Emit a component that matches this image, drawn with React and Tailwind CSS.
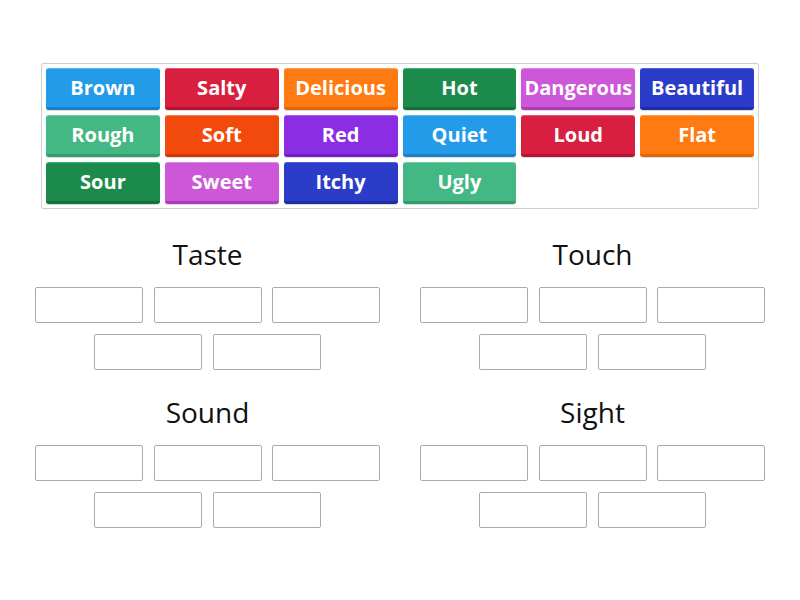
import React from "react";

const tiles = [
  { text: "Brown", cls: "bg-[#239be8] border-t-[#5cb8f2] border-b-[#1a7fc4]" },
  { text: "Salty", cls: "bg-[#d91f3f] border-t-[#e8546c] border-b-[#b3142f]" },
  { text: "Delicious", cls: "bg-[#ff7b12] border-t-[#ff9d4d] border-b-[#e0650a]" },
  { text: "Hot", cls: "bg-[#1c8a4b] border-t-[#2fbd6a] border-b-[#14703b]" },
  { text: "Dangerous", cls: "bg-[#cc57d9] border-t-[#dc85e6] border-b-[#ad3cba]" },
  { text: "Beautiful", cls: "bg-[#2b3cc8] border-t-[#4c5fe0] border-b-[#1f2da3]" },
  { text: "Rough", cls: "bg-[#43b884] border-t-[#6fd0a3] border-b-[#339a6b]" },
  { text: "Soft", cls: "bg-[#f24a0c] border-t-[#ff7440] border-b-[#cf3a05]" },
  { text: "Red", cls: "bg-[#8b2de3] border-t-[#a95af0] border-b-[#7220c2]" },
  { text: "Quiet", cls: "bg-[#239be8] border-t-[#5cb8f2] border-b-[#1a7fc4]" },
  { text: "Loud", cls: "bg-[#d91f3f] border-t-[#e8546c] border-b-[#b3142f]" },
  { text: "Flat", cls: "bg-[#ff7b12] border-t-[#ff9d4d] border-b-[#e0650a]" },
  { text: "Sour", cls: "bg-[#1c8a4b] border-t-[#2fbd6a] border-b-[#14703b]" },
  { text: "Sweet", cls: "bg-[#cc57d9] border-t-[#dc85e6] border-b-[#ad3cba]" },
  { text: "Itchy", cls: "bg-[#2b3cc8] border-t-[#4c5fe0] border-b-[#1f2da3]" },
  { text: "Ugly", cls: "bg-[#43b884] border-t-[#6fd0a3] border-b-[#339a6b]" },
];

const groups = [["Taste", "Touch"], ["Sound", "Sight"]];

function Group({ title }) {
  return (
    <div className="w-[345px]">
      <h2 className="text-center text-[28px] leading-[38px] text-[#111] mb-[14px]">{title}</h2>
      <div className="flex flex-wrap justify-center gap-x-[10.5px] gap-y-[11px]">
        {[0, 1, 2, 3, 4].map((i) => (
          <div key={i} className="w-[108px] h-[36px] border border-[#aaaaaa] rounded-[2px] bg-white" />
        ))}
      </div>
    </div>
  );
}

export default function App() {
  return (
    <div className="w-[800px] h-[600px] bg-white pt-[63px]" style={{ fontFamily: '"Open Sans", sans-serif' }}>
      <div className="mx-auto w-[718px] border border-[#cfcfcf] rounded-[2px] p-[4px] grid grid-cols-6 gap-[5px]">
        {tiles.map((t) => (
          <div
            key={t.text}
            className={`h-[42px] rounded-[3px] border-t border-b-[3px] pb-[1px] shadow-[0_1px_1px_rgba(0,0,0,0.15)] flex items-center justify-center text-white font-bold text-[20px] whitespace-nowrap ${t.cls}`}
          >
            {t.text}
          </div>
        ))}
      </div>
      <div className="mt-[26px] flex flex-col gap-[23px]">
        {groups.map((row, i) => (
          <div key={i} className="flex justify-center gap-[40px]">
            {row.map((g) => (
              <Group key={g} title={g} />
            ))}
          </div>
        ))}
      </div>
    </div>
  );
}
